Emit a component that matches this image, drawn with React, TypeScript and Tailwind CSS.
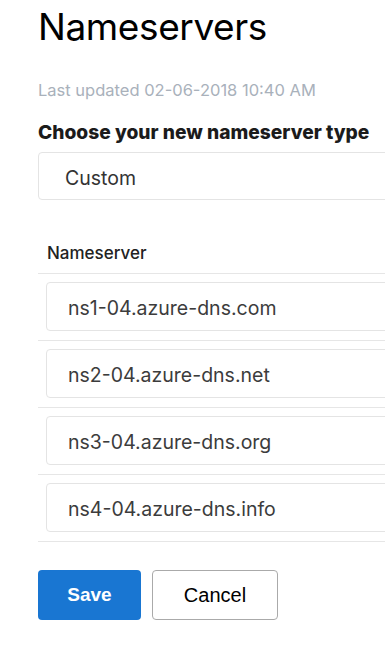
import React from "react";

const servers = [
  "ns1-04.azure-dns.com",
  "ns2-04.azure-dns.net",
  "ns3-04.azure-dns.org",
  "ns4-04.azure-dns.info",
];

export default function App() {
  return (
    <div className="w-[385px] h-[651px] overflow-hidden bg-white font-['Inter',sans-serif]">
      <div className="w-[440px] pl-[38px]">
        <h1 className="pt-[7px] text-[37px] leading-[40px] font-normal text-black tracking-[-0.4px]">
          Nameservers
        </h1>
        <p className="mt-[33px] text-[16.5px] leading-[20px] text-[#a9b1bb]">
          Last updated 02-06-2018 10:40 AM
        </p>
        <p className="mt-[21px] text-[19.2px] leading-[22px] font-extrabold text-[#1b1b1b]">
          Choose your new nameserver type
        </p>
        <div className="mt-[9px] h-[48px] flex items-center pt-[5px] pl-[26px] rounded-[4px] border border-[#e4e4e4] text-[19.5px] text-[#333]">
          Custom
        </div>
        <div className="mt-[43px] pl-[9px] pb-[10px] text-[17px] leading-[20px] font-medium text-[#222]">
          Nameserver
        </div>
        <div className="border-t border-[#e6e6e6]">
          {servers.map((s) => (
            <div key={s} className="pt-[8px] pb-[9px] pl-[8px] border-b border-[#e6e6e6]">
              <div className="h-[49px] flex items-center pt-[5px] pl-[21px] rounded-[4px] border border-[#e4e4e4] text-[19.5px] text-[#3c3c3c]">
                {s}
              </div>
            </div>
          ))}
        </div>
        <div className="mt-[28px] flex gap-[11px]">
          <button
            type="button"
            className="w-[103px] h-[50px] rounded-[4px] bg-[#1976d2] text-white text-[19px] font-bold font-['Liberation_Sans',sans-serif]"
          >
            Save
          </button>
          <button
            type="button"
            className="w-[126px] h-[50px] rounded-[4px] border border-[#aaa] bg-white text-black text-[20px] font-['Liberation_Sans',sans-serif]"
          >
            Cancel
          </button>
        </div>
      </div>
    </div>
  );
}
